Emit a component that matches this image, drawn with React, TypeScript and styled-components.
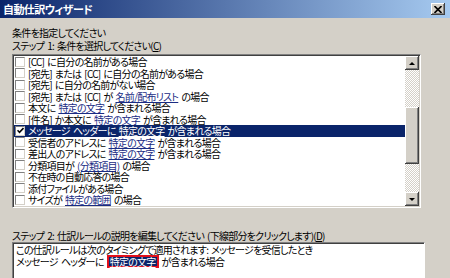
import * as React from 'react'
import styled, { createGlobalStyle } from 'styled-components'

const FACE = '#d4d0c8'
const NAVY = '#0a246a'
const SHADOW = '#808080'
const DARK = '#404040'

const GlobalStyle = createGlobalStyle`
  html, body {
    margin: 0;
    padding: 0;
    background: ${FACE};
    overflow: hidden;
  }
  body {
    font-family: 'Noto Sans CJK JP', 'Noto Sans', sans-serif;
    font-feature-settings: 'palt';
    letter-spacing: -0.75px;
    word-spacing: 1.5px;
    color: #000;
  }
`

const Window = styled.div`
  width: 450px;
  height: 278px;
  display: flex;
  flex-direction: column;
  background: ${FACE};
  overflow: hidden;
`
const TitleBar = styled.div`
  height: 18px;
  flex: none;
  display: flex;
  align-items: center;
  padding: 0 5px 0 3px;
  background: linear-gradient(to right, ${NAVY}, #a6caf0);
`
const Title = styled.div`
  flex: 1;
  color: #fff;
  font-size: 11px;
  font-weight: 700;
  letter-spacing: -0.6px;
  line-height: 18px;
`
const CloseButton = styled.div`
  width: 14px;
  height: 12px;
  display: flex;
  align-items: center;
  justify-content: center;
  background: ${FACE};
  box-shadow: inset -1px -1px ${DARK}, inset 1px 1px #fff,
    inset -2px -2px ${SHADOW};
`
const Body = styled.div`
  display: flex;
  flex-direction: column;
  padding: 8px 0 0 12px;
`
const Label = styled.div<{ $gap?: number }>`
  font-size: 10px;
  line-height: 13px;
  white-space: nowrap;
  margin-top: ${(p) => p.$gap || 0}px;
`
const ListBox = styled.div`
  width: 405px;
  height: 150px;
  margin-top: 2px;
  display: flex;
  background: #fff;
  border: 1px solid;
  border-color: ${SHADOW} #fff #fff ${SHADOW};
  box-shadow: inset 1px 1px ${DARK}, inset -1px -1px ${FACE};
  padding: 1px;
`
const Rows = styled.div`
  flex: 1;
  display: flex;
  flex-direction: column;
  overflow: hidden;
`
const Row = styled.div<{ $selected?: boolean }>`
  height: 11.5px;
  flex: none;
  display: flex;
  align-items: center;
  gap: 3px;
  padding-left: 1px;
  font-size: 10px;
  line-height: 11.5px;
  white-space: nowrap;
  background: ${(p) => (p.$selected ? NAVY : 'transparent')};
  color: ${(p) => (p.$selected ? '#fff' : '#000')};
`
const CheckBox = styled.div`
  width: 8px;
  height: 8px;
  flex: none;
  display: flex;
  align-items: center;
  justify-content: center;
  background: #fff;
  border: 1px solid;
  border-color: ${SHADOW} ${FACE} ${FACE} ${SHADOW};
`
const Link = styled.span<{ $selected?: boolean }>`
  color: ${(p) => (p.$selected ? '#fff' : '#1a2c84')};
  text-decoration: underline;
  text-underline-offset: 1px;
`
const ScrollBar = styled.div`
  width: 14px;
  flex: none;
  display: flex;
  flex-direction: column;
  background: repeating-conic-gradient(#fff 0 25%, ${FACE} 0 50%) 0 0 / 2px
    2px;
`
const Raised = styled.div<{ $size: number }>`
  height: ${(p) => p.$size}px;
  flex: none;
  display: flex;
  align-items: center;
  justify-content: center;
  background: ${FACE};
  box-shadow: inset -1px -1px ${DARK}, inset 1px 1px #fff,
    inset -2px -2px ${SHADOW};
`
const Track = styled.div<{ $size: number }>`
  height: ${(p) => p.$size}px;
  flex: none;
`
const Arrow = styled.div<{ $down?: boolean }>`
  width: 0;
  height: 0;
  border-left: 3px solid transparent;
  border-right: 3px solid transparent;
  ${(p) =>
    p.$down ? 'border-top: 3px solid #000;' : 'border-bottom: 3px solid #000;'}
`
const RuleBox = styled.div`
  width: 405px;
  height: 60px;
  background: #fff;
  border: 1px solid;
  border-color: ${SHADOW} #fff #fff ${SHADOW};
  box-shadow: inset 1px 1px ${DARK};
  padding: 2px 3px;
  font-size: 10px;
  line-height: 10px;
  white-space: nowrap;
`
const RuleLine = styled.div`
  height: 10px;
`
const Picked = styled.span`
  display: inline-block;
  line-height: 9px;
  padding: 0 1px;
  background: ${NAVY};
  color: #fff;
  text-decoration: underline;
  border: 2px solid #e0101c;
`

type Part = string | { link: string }

const conditions: Part[][] = [
  ['[CC] に自分の名前がある場合'],
  ['[宛先] または [CC] に自分の名前がある場合'],
  ['[宛先] に自分の名前がない場合'],
  ['[宛先] または [CC] が ', { link: '名前/配布リスト' }, ' の場合'],
  ['本文に ', { link: '特定の文字' }, ' が含まれる場合'],
  ['[件名] か本文に ', { link: '特定の文字' }, ' が含まれる場合'],
  ['メッセージ ヘッダーに ', { link: '特定の文字' }, ' が含まれる場合'],
  ['受信者のアドレスに ', { link: '特定の文字' }, ' が含まれる場合'],
  ['差出人のアドレスに ', { link: '特定の文字' }, ' が含まれる場合'],
  ['分類項目が ', { link: '(分類項目)' }, ' の場合'],
  ['不在時の自動応答の場合'],
  ['添付ファイルがある場合'],
  ['サイズが ', { link: '特定の範囲' }, ' の場合'],
]

const SELECTED = 6

const CheckMark = () => (
  <svg width="7" height="7" viewBox="0 0 7 7">
    <path d="M0.5 3.2 L2.5 5.3 L6.5 1" stroke="#000" strokeWidth="1.6" fill="none" />
  </svg>
)

const CloseIcon = () => (
  <svg width="8" height="7" viewBox="0 0 8 7">
    <path d="M0.5 0 L7.5 7 M7.5 0 L0.5 7" stroke="#000" strokeWidth="1.6" />
  </svg>
)

export default function App() {
  return (
    <Window>
      <GlobalStyle />
      <TitleBar>
        <Title>自動仕訳ウィザード</Title>
        <CloseButton>
          <CloseIcon />
        </CloseButton>
      </TitleBar>
      <Body>
        <Label>条件を指定してください</Label>
        <Label>ステップ 1: 条件を選択してください(<u>C</u>)</Label>
        <ListBox>
          <Rows>
            {conditions.map((parts, i) => {
              const selected = i === SELECTED
              return (
                <Row key={i} $selected={selected}>
                  <CheckBox>{selected && <CheckMark />}</CheckBox>
                  <span>
                    {parts.map((part, j) =>
                      typeof part === 'string' ? (
                        <React.Fragment key={j}>{part}</React.Fragment>
                      ) : (
                        <Link key={j} $selected={selected}>
                          {part.link}
                        </Link>
                      )
                    )}
                  </span>
                </Row>
              )
            })}
          </Rows>
          <ScrollBar>
            <Raised $size={14}>
              <Arrow />
            </Raised>
            <Track $size={37} />
            <Raised $size={57} />
            <Track $size={28} />
            <Raised $size={14}>
              <Arrow $down />
            </Raised>
          </ScrollBar>
        </ListBox>
        <Label $gap={21}>
          ステップ 2: 仕訳ルールの説明を編集してください (下線部分をクリックします)(<u>D</u>)
        </Label>
        <RuleBox>
          <RuleLine>
            この仕訳ルールは次のタイミングで適用されます: メッセージを受信したとき
          </RuleLine>
          <RuleLine>
            メッセージ ヘッダーに <Picked>特定の文字</Picked> が含まれる場合
          </RuleLine>
        </RuleBox>
      </Body>
    </Window>
  )
}
